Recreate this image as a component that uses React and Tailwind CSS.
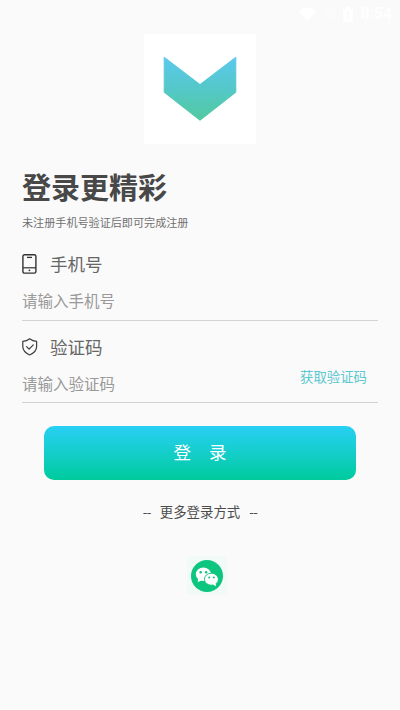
import React, { useState } from "react";

const fieldClass = "border-b border-[#d3d3d3]";
const labelClass = "text-[17.5px] leading-[26px] text-[#666]";
const inputClass =
  "block min-w-0 flex-1 bg-transparent p-0 text-[15.5px] leading-[24px] text-[#444] outline-none placeholder:text-[#999]";

const StatusBar = () => (
  <div className="flex h-[28px] items-center justify-end pr-[8px] text-white">
    <svg width="19" height="14" viewBox="0 0 20 16" fill="currentColor">
      <path d="M0 4.5C5.5-.8 14.5-.8 20 4.5L10 16z" />
    </svg>
    <svg
      className="ml-[4px] opacity-40"
      width="17"
      height="16"
      viewBox="0 0 17 16"
      fill="none"
      stroke="currentColor"
      strokeWidth="1.5"
    >
      <circle cx="8.5" cy="8" r="6" />
      <path d="M4.3 3.8l8.4 8.4" />
    </svg>
    <svg
      className="ml-[5px]"
      width="10"
      height="15"
      viewBox="0 0 10 17"
      fill="currentColor"
      fillRule="evenodd"
      preserveAspectRatio="none"
    >
      <path d="M3 0h4v2h3v15H0V2h3zM4 5v5h2V5zM4 11.5v2h2v-2z" />
    </svg>
    <span className="ml-[8px] font-['Roboto',sans-serif] text-[16px] leading-none font-medium">
      8:54
    </span>
  </div>
);

const Logo = () => (
  <div className="mx-auto mt-[6px] h-[110px] w-[112px] bg-white">
    <svg width="112" height="110" viewBox="0 0 112 110">
      <defs>
        <linearGradient id="logoFill" x1="0" y1="0" x2="0" y2="1">
          <stop offset="0" stopColor="#5bc8ee" />
          <stop offset="0.5" stopColor="#54c8c8" />
          <stop offset="1" stopColor="#52c9a0" />
        </linearGradient>
      </defs>
      <path
        d="M20.2 23.2L56 50.5L91.8 23.2V58.3L56 86.3L20.2 58.3Z"
        fill="url(#logoFill)"
        stroke="url(#logoFill)"
        strokeWidth="1"
        strokeLinejoin="round"
      />
    </svg>
  </div>
);

const PhoneIcon = () => (
  <svg width="16" height="20" viewBox="0 0 16 20" fill="none" stroke="#333">
    <rect x="0.9" y="0.7" width="13" height="18.4" rx="1.6" strokeWidth="1.4" />
    <path d="M1 13.8h13" strokeWidth="1.2" />
    <path d="M5 3.4h5" strokeWidth="1.3" />
    <circle cx="7.4" cy="16.3" r="0.9" fill="#333" stroke="none" />
  </svg>
);

const ShieldIcon = () => (
  <svg
    width="16"
    height="18"
    viewBox="0 0 16 18"
    fill="none"
    stroke="#3c3c3c"
    strokeWidth="1.2"
    strokeLinecap="round"
    strokeLinejoin="round"
  >
    <path d="M7.7.8C5.8 2.3 3.4 3.2.8 3.4v5.2c0 4 2.7 6.6 6.9 8.4 4.2-1.8 6.9-4.4 6.9-8.4V3.4C12 3.2 9.6 2.3 7.7.8z" />
    <path d="M4.6 8.7l2.5 2.5 4.2-4.3" />
  </svg>
);

const WechatIcon = () => (
  <svg width="32" height="32" viewBox="0 0 32 32">
    <circle cx="16" cy="16" r="16" fill="#0cc57e" />
    <g fill="#fff">
      <ellipse cx="12.4" cy="14.3" rx="7.6" ry="6.7" />
      <path d="M7.2 18.5L6.7 22.3L10.8 20.2z" />
      <ellipse
        cx="20.4"
        cy="19.2"
        rx="7"
        ry="6"
        stroke="#0cc57e"
        strokeWidth="0.9"
      />
      <path d="M21.8 24.4L24.9 26.2L24.7 23z" />
    </g>
    <g fill="#0cc57e">
      <circle cx="9.7" cy="12.2" r="1.2" />
      <circle cx="15.1" cy="12.2" r="1.2" />
      <circle cx="18.2" cy="17.6" r="1" />
      <circle cx="22.8" cy="17.6" r="1" />
    </g>
  </svg>
);

const App = () => {
  const [phone, setPhone] = useState("");
  const [code, setCode] = useState("");

  return (
    <div className="h-[710px] w-[400px] overflow-hidden bg-[#fafafa] font-['Noto_Sans_CJK_SC',sans-serif]">
      <StatusBar />
      <Logo />

      <div className="px-[22px]">
        <h1 className="mt-[22px] text-[29px] leading-[40px] font-bold text-[#484848]">
          登录更精彩
        </h1>
        <p className="mt-[8px] text-[11.1px] leading-[16px] text-[#707070]">
          未注册手机号验证后即可完成注册
        </p>

        {/* 手机号 */}
        <div className={`${fieldClass} mt-[21px] h-[70px]`}>
          <div className="flex items-center gap-[12px]">
            <PhoneIcon />
            <label htmlFor="phone" className={labelClass}>
              手机号
            </label>
          </div>
          <div className="mt-[11px] flex">
            <input
              id="phone"
              value={phone}
              onChange={(e) => setPhone(e.target.value)}
              placeholder="请输入手机号"
              className={inputClass}
            />
          </div>
        </div>

        {/* 验证码 */}
        <div className={`${fieldClass} mt-[13px] h-[69px]`}>
          <div className="flex items-center gap-[12px]">
            <ShieldIcon />
            <label htmlFor="code" className={labelClass}>
              验证码
            </label>
          </div>
          <div className="mt-[11px] flex">
            <input
              id="code"
              value={code}
              onChange={(e) => setCode(e.target.value)}
              placeholder="请输入验证码"
              className={inputClass}
            />
            <button className="-mt-[7px] mr-[11px] h-[24px] text-[13.4px] leading-[24px] text-[#5cc8d0]">
              获取验证码
            </button>
          </div>
        </div>

        <button className="mx-auto mt-[23px] flex h-[54px] w-[312px] items-center justify-center gap-[18px] rounded-[10px] bg-linear-to-b from-[#28cff5] to-[#00cb9c] pb-[2px] text-[17.5px] text-white">
          <span>登</span>
          <span>录</span>
        </button>
      </div>

      <div className="mt-[21px] flex justify-center gap-[9px] text-[13.4px] leading-[20px] text-[#4c4c4c]">
        <span className="tracking-[-0.6px]">--</span>
        <span>更多登录方式</span>
        <span className="tracking-[-0.6px]">--</span>
      </div>

      <button className="mt-[35px] ml-[187px] flex h-[39px] w-[40px] items-center justify-center rounded-[4px] bg-[#f1faf6]">
        <WechatIcon />
      </button>
    </div>
  );
};

export default App;
